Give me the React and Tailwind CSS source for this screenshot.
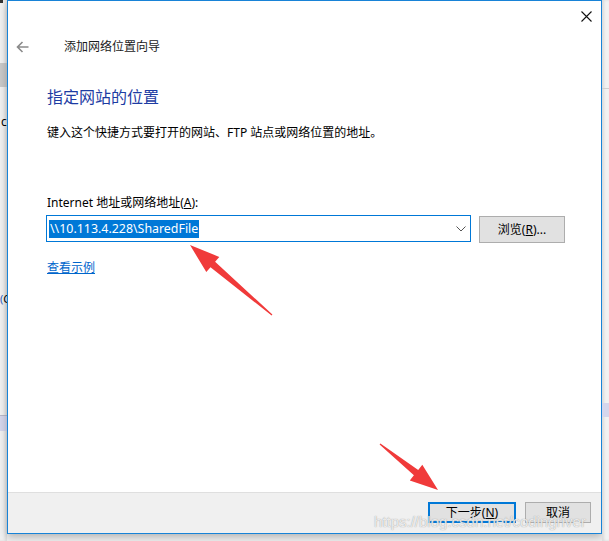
import React from "react";

const FONT = { fontFamily: '"Noto Sans", "Noto Sans CJK SC", sans-serif' };

function LeftStrip() {
  return (
    <div className="w-[7px] h-[541px] flex flex-col bg-[#f1f1f1] overflow-hidden shadow-[inset_-2px_0_3px_rgba(0,0,0,0.08)]">
      <div className="h-[3px] w-[3px] bg-[#333]" />
      <div className="h-[60px]" />
      <div className="h-[24px] bg-[#c9c9c9]" />
      <div className="h-[28px]" />
      <div className="h-[14px] text-[12px] leading-[14px] text-[#000] pl-[1px]" style={FONT}>c</div>
      <div className="h-[162px]" />
      <div className="h-[16px] text-[11px] leading-[16px] whitespace-nowrap" style={FONT}>
        <span className="text-[#3060c0]">(</span>C
      </div>
      <div className="h-[108px]" />
      <div className="h-[1px] bg-[#b8b8c8]" />
      <div className="h-[15px] bg-[#d5d6ec]" />
    </div>
  );
}

function RightStrip() {
  return (
    <div className="w-[7px] h-[541px] flex flex-col bg-[#f2f2f2] shadow-[inset_2px_0_3px_rgba(0,0,0,0.1)]">
      <div className="h-[88px]" />
      <div className="h-[1px] bg-[#cfcfcf]" />
      <div className="h-[314px]" />
      <div className="h-[14px] bg-[#d5d6ec]" />
    </div>
  );
}

function Arrows() {
  return (
    <svg className="absolute left-0 top-0 pointer-events-none" width="609" height="541" viewBox="0 0 609 541">
      <polygon
        fill="#f03a3a"
        points="190,245 219.3,256.9 215.1,261.8 272.4,314.5 271.6,315.5 210.5,267.2 206.3,272.1"
      />
      <polygon
        fill="#f03a3a"
        points="438,490 409.8,480.4 413.9,475.3 379.6,444.4 380.4,443.6 418.2,469.9 422.3,464.8"
      />
    </svg>
  );
}

export default function App() {
  return (
    <div className="relative w-[609px] h-[541px] bg-[#f0f0f0] overflow-hidden" style={FONT}>
      <div className="flex flex-row">
        <LeftStrip />
        <div className="flex flex-col">
          <div className="w-[595px] h-[534px] border border-[#1883d7] bg-white flex flex-col shadow-[0_3px_8px_rgba(0,0,0,0.25)]">
            <div className="flex-1 flex flex-col">
              {/* close bar */}
              <div className="h-[30px] flex flex-row justify-end items-center pr-[9px]">
                <svg width="11" height="11" viewBox="0 0 11 11">
                  <path d="M0.5 0.5 L10.5 10.5 M10.5 0.5 L0.5 10.5" stroke="#111" strokeWidth="1.1" />
                </svg>
              </div>
              {/* title row */}
              <div className="h-[31px] flex flex-row items-center">
                <div className="w-[56px] pl-[8px] flex items-center">
                  <svg width="13" height="12" viewBox="0 0 13 12">
                    <path d="M12.5 6 L1.5 6 M6.5 1 L1.5 6 L6.5 11" stroke="#8a8a8a" strokeWidth="1.6" fill="none" />
                  </svg>
                </div>
                <div className="text-[12px] leading-[16px] text-[#1a1a1a]">添加网络位置向导</div>
              </div>
              <div className="pl-[39px] flex flex-col">
                <div className="mt-[23px] text-[16px] leading-[24px] text-[#1d3ca3]">指定网站的位置</div>
                <div className="mt-[16px] text-[12px] leading-[16px] text-black">
                  键入这个快捷方式要打开的网站、FTP 站点或网络位置的地址。
                </div>
                <div className="mt-[54px] text-[12px] leading-[16px] text-black">
                  Internet 地址或网络地址(<span className="underline">A</span>):
                </div>
                <div className="mt-[4px] flex flex-row items-start">
                  <div className="-ml-[1px] w-[425px] h-[27px] border border-[#0078d7] flex flex-row items-center pl-[2px] pr-[4px]">
                    <div className="flex-1 flex">
                      <span className="bg-[#0078d7] text-white text-[12.4px] leading-[18px] px-[1px]">
                        \\10.113.4.228\SharedFile
                      </span>
                    </div>
                    <svg width="10" height="6" viewBox="0 0 10 6">
                      <path d="M0.5 0.5 L5 5 L9.5 0.5" stroke="#555" strokeWidth="1" fill="none" />
                    </svg>
                  </div>
                  <div className="ml-[8px] mt-[1px] w-[86px] h-[27px] bg-[#e1e1e1] border border-[#adadad] flex items-center justify-center text-[12px] text-black">
                    浏览(<span className="underline">R</span>)...
                  </div>
                </div>
                <div className="mt-[17px] text-[12px] leading-[16px]">
                  <span className="text-[#0066cc] underline">查看示例</span>
                </div>
              </div>
            </div>
            {/* footer */}
            <div className="h-[41px] border-t border-[#dfdfdf] bg-[#f0f0f0] flex flex-row justify-end pt-[9px] pr-[10px]">
              <div className="w-[88px] h-[21px] border-2 border-[#0078d7] bg-[#e1e1e1] flex items-center justify-center text-[12px] text-black">
                下一步(<span className="underline">N</span>)
              </div>
              <div className="ml-[9px] w-[66px] h-[21px] border border-[#adadad] bg-[#e1e1e1] flex items-center justify-center text-[12px] text-black">
                取消
              </div>
            </div>
          </div>
        </div>
        <RightStrip />
      </div>
      <Arrows />
      <div
        className="absolute left-[374px] top-[512px] text-[15px] leading-[20px] text-white/80 whitespace-nowrap pointer-events-none"
        style={{ fontFamily: '"Liberation Sans", sans-serif', textShadow: "0 0 1px rgba(120,120,120,0.9)" }}
      >
        https://blog.csdn.net/codingriver
      </div>
    </div>
  );
}
